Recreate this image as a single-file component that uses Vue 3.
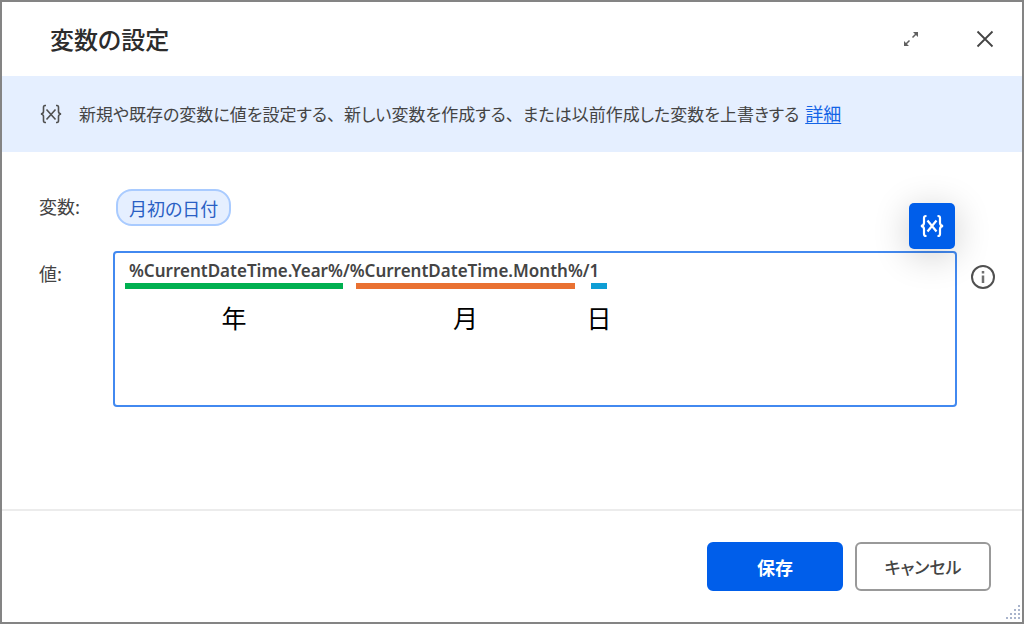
<script setup>
import { ref } from 'vue'

const value = ref('%CurrentDateTime.Year%/%CurrentDateTime.Month%/1')
const dots = [
  [14, 2],
  [10, 6], [14, 6],
  [6, 10], [10, 10], [14, 10],
  [2, 14], [6, 14], [10, 14], [14, 14]
]
</script>

<template>
  <main class="dialog">
    <header class="titlebar">
      <h1>変数の設定</h1>
      <button class="icon-btn" type="button" aria-label="最大化">
        <svg width="16" height="16" viewBox="0 0 16 16" fill="none" stroke="#606060" stroke-width="1.5">
          <path d="M9.5 6.5 13 3M3 13l3.500-3.500" />
          <path d="M10 1h5v5zM1 10v5h5z" fill="#606060" stroke="none" />
        </svg>
      </button>
      <button class="icon-btn" type="button" aria-label="閉じる">
        <svg width="18" height="18" viewBox="0 0 18 18" fill="none" stroke="#444" stroke-width="1.800">
          <path d="M1.500 1.500l15 15M16.500 1.500l-15 15" />
        </svg>
      </button>
    </header>

    <section class="banner">
      <svg class="var-icon" width="22" height="20" viewBox="0 0 22 20" fill="none" stroke="#505050" stroke-width="1.600">
        <path d="M6 1.500H5Q3.500 1.500 3.500 3.500V7.500Q3.500 9.500 1 10Q3.500 10.500 3.500 12.500V16.500Q3.500 18.500 5 18.500H6" />
        <path d="M16 1.500H17Q18.500 1.500 18.500 3.500V7.500Q18.500 9.500 21 10Q18.500 10.500 18.500 12.500V16.500Q18.500 18.500 17 18.500H16" />
        <path d="M6.500 5.500l9 10M15.500 5.500l-9 10" />
      </svg>
      <p>新規や既存の変数に値を設定する<span class="comma">、</span>新しい変数を作成する<span class="comma">、</span>または以前作成した変数を上書きする <a href="#">詳細</a></p>
    </section>

    <form class="body" @submit.prevent>
      <div class="row">
        <span id="var-label" class="label">変数:</span>
        <button class="chip" type="button" aria-describedby="var-label">月初の日付</button>
      </div>
      <div class="row value-row">
        <label class="label value-label" for="value">値:</label>
        <div class="field">
          <textarea id="value" v-model="value" spellcheck="false"></textarea>
          <div class="note year">年</div>
          <div class="note month">月</div>
          <div class="note day">日</div>
          <button class="picker" type="button" aria-label="変数の選択">
            <svg width="26" height="24" viewBox="0 0 26 24" fill="none" stroke="#fff" stroke-width="2.200">
              <path d="M7.500 2H7Q5 2 5 4V9Q5 11.500 2 12Q5 12.500 5 15V20Q5 22 7 22H7.500" />
              <path d="M18.500 2H19Q21 2 21 4V9Q21 11.500 24 12Q21 12.500 21 15V20Q21 22 19 22H18.500" />
              <path d="M8.500 6.500l9 11M17.500 6.500l-9 11" />
            </svg>
          </button>
        </div>
        <button class="info" type="button" aria-label="情報">
          <svg width="26" height="26" viewBox="0 0 26 26" fill="none" stroke="#505050" stroke-width="2">
            <circle cx="13" cy="13" r="11" />
            <path d="M13 11.500v7.500M13 7v2.500" stroke="#707070" stroke-width="2.500" />
          </svg>
        </button>
      </div>
    </form>

    <footer class="footer">
      <button class="btn primary" type="button">保存</button>
      <button class="btn" type="button">キャンセル</button>
      <svg class="grip" width="16" height="16" viewBox="0 0 16 16" fill="#a9b4cc">
        <rect v-for="([x, y], i) in dots" :key="i" :x="x - 1" :y="y - 1" width="2" height="2" />
      </svg>
    </footer>
  </main>
</template>

<style>
body {
  margin: 0;
}
</style>

<style scoped>
* {
  box-sizing: border-box;
}
.dialog {
  display: flex;
  flex-direction: column;
  min-height: 100vh;
  border: 2px solid #848484;
  background: #fff;
  color: #444;
  font-family: "Noto Sans CJK JP", sans-serif;
  font-size: 18px;
  font-feature-settings: "palt";
}
button {
  padding: 0;
  border: 0;
  background: none;
  color: inherit;
  font: inherit;
  font-feature-settings: inherit;
  cursor: pointer;
}
.titlebar {
  display: flex;
  align-items: center;
  gap: 48px;
  height: 74px;
  padding: 0 24px 0 48px;
}
h1 {
  flex: 1;
  margin: 0;
  color: #2c2c2c;
  font-size: 24px;
  font-weight: 500;
  line-height: 32px;
}
.icon-btn {
  display: flex;
  align-items: center;
  justify-content: center;
  width: 26px;
  height: 26px;
}
.banner {
  display: flex;
  align-items: center;
  gap: 17px;
  min-height: 76px;
  padding: 0 38px;
  background: #e5efff;
}
.banner p {
  margin: 0;
  padding-bottom: 2px;
  font-size: 17px;
  line-height: 28px;
}
.comma {
  font-feature-settings: normal;
}
.banner a {
  margin-left: 2px;
  color: #1464e6;
  font-size: 18px;
  text-underline-offset: 2px;
}
.var-icon {
  flex: none;
}
.body {
  flex: 1;
  padding: 37px 26px 32px 37px;
}
.row {
  display: flex;
  align-items: flex-start;
}
.label {
  flex: none;
  width: 74px;
  line-height: 34px;
}
.chip {
  height: 37px;
  margin-left: 3px;
  padding: 0 11px;
  border: 2px solid #a9cbff;
  border-radius: 16px;
  background: #e5efff;
  color: #2a5fc4;
}
.value-row {
  margin-top: 25px;
}
.value-label {
  padding-top: 5px;
}
.field {
  position: relative;
  flex: 1;
}
textarea {
  display: block;
  width: 100%;
  height: 156px;
  padding: 5px 14px;
  border: 2px solid #4289f0;
  border-radius: 4px;
  outline: none;
  background: #fff;
  color: #444;
  font-family: "Noto Sans", "Noto Sans CJK JP", sans-serif;
  font-size: 17px;
  font-weight: 600;
  line-height: 26px;
  resize: none;
}
.note {
  position: absolute;
  top: 32px;
  display: flex;
  justify-content: center;
  padding-top: 10px;
  border-top: 6px solid;
  color: #000;
  font-size: 25px;
  line-height: 36px;
  pointer-events: none;
}
.year {
  left: 12px;
  width: 218px;
  border-color: #00b050;
}
.month {
  left: 243px;
  width: 219px;
  border-color: #e97132;
}
.day {
  left: 478px;
  width: 16px;
  border-color: #0f9ed5;
}
.picker {
  position: absolute;
  top: -48px;
  right: 2px;
  display: flex;
  align-items: center;
  justify-content: center;
  width: 46px;
  height: 46px;
  border-radius: 5px;
  background: #005eea;
  box-shadow: 0 6px 36px rgba(0, 0, 0, 0.2);
}
.info {
  display: flex;
  flex: none;
  margin: 13px 0 0 13px;
}
.footer {
  position: relative;
  display: flex;
  justify-content: flex-end;
  gap: 12px;
  min-height: 113px;
  padding: 31px 31px 0;
  border-top: 2px solid #ececec;
}
.btn {
  width: 136px;
  height: 49px;
  border: 2px solid #999;
  border-radius: 6px;
  font-size: 17px;
  font-weight: 500;
}
.primary {
  border-color: #005eea;
  background: #005eea;
  color: #fff;
  font-size: 18px;
  font-weight: 700;
}
.grip {
  position: absolute;
  right: 1px;
  bottom: 2px;
}
</style>
